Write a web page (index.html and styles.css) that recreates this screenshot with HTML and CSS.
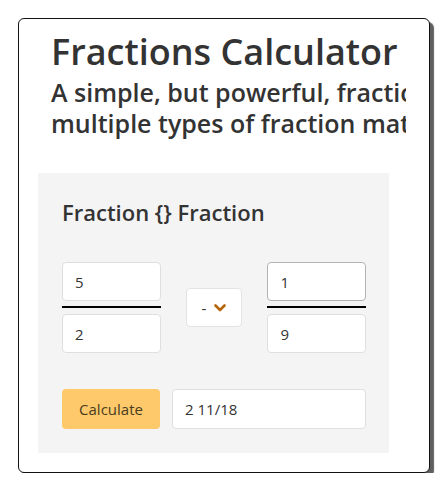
FILE: index.html
```html
<!DOCTYPE html>
<html>
<head>
<meta charset="utf-8">
<link rel="stylesheet" href="styles.css">
</head>
<body>
<div class="card">
  <div class="viewport">
    <header class="intro">
      <h1 class="title">Fractions Calculator</h1>
      <p class="subtitle">A simple, but powerful, fraction calculator for<br>multiple types of fraction math operations.</p>
    </header>
    <section class="panel">
      <h2 class="panel-title">Fraction {} Fraction</h2>
      <div class="equation">
        <div class="fraction">
          <input class="field" type="text" value="5">
          <div class="bar"></div>
          <input class="field" type="text" value="2">
        </div>
        <div class="operator">
          <span class="op-sign">-</span>
          <svg class="chevron" width="12" height="8" viewBox="0 0 12 8"><path d="M1.5 1.5 L6 6 L10.5 1.5" fill="none" stroke="#b7650b" stroke-width="2.6" stroke-linecap="round" stroke-linejoin="round"/></svg>
        </div>
        <div class="fraction">
          <input class="field field-active" type="text" value="1">
          <div class="bar"></div>
          <input class="field" type="text" value="9">
        </div>
      </div>
      <div class="actions">
        <button class="calc-btn">Calculate</button>
        <input class="field result" type="text" value="2 11/18">
      </div>
    </section>
  </div>
</div>
</body>
</html>
```
FILE: styles.css
```css
html, body {
  margin: 0;
  padding: 0;
  background: #ffffff;
}
body {
  padding: 18px 0 0 18px;
  font-family: "Open Sans", "Noto Sans", sans-serif;
  color: #333333;
}
.card {
  box-sizing: border-box;
  width: 412px;
  height: 455px;
  border: 1px solid #111111;
  border-radius: 6px;
  background: #ffffff;
  box-shadow: 4px 4px 1px #5f5f5f;
  padding-left: 19px;
}
.viewport {
  width: 368px;
  overflow: hidden;
}
.intro {
  padding-left: 13px;
  padding-top: 8px;
  height: 154px;
  box-sizing: border-box;
}
.title {
  margin: 0;
  font-size: 36px;
  font-weight: 600;
  line-height: 50px;
  white-space: nowrap;
  color: #333333;
}
.subtitle {
  margin: 0;
  font-size: 25px;
  font-weight: 600;
  line-height: 31px;
  white-space: nowrap;
  color: #333333;
}
.panel {
  width: 351px;
  height: 280px;
  box-sizing: border-box;
  background: #f5f4f5;
  padding: 23px 23px 0 24px;
}
.panel-title {
  margin: 0;
  font-size: 22px;
  font-weight: 600;
  line-height: 32px;
  color: #333333;
}
.equation {
  display: flex;
  align-items: center;
  margin-top: 34px;
}
.fraction {
  display: flex;
  flex-direction: column;
  width: 99px;
}
.field {
  box-sizing: border-box;
  height: 39px;
  border: 1px solid #dfdfdf;
  border-radius: 4px;
  background: #ffffff;
  font-family: "Open Sans", "Noto Sans", sans-serif;
  font-size: 15px;
  color: #333333;
  padding: 0 12px;
  width: 100%;
  outline: none;
}
.field-active {
  border-color: #b3b3b3;
}
.bar {
  height: 2px;
  background: #000000;
  margin: 5px 0 6px;
}
.operator {
  box-sizing: border-box;
  width: 57px;
  height: 39px;
  margin: 0 25px 0 25px;
  border: 1px solid #e3e3e3;
  border-radius: 4px;
  background: #ffffff;
  display: flex;
  align-items: center;
  justify-content: center;
  gap: 8px;
  font-size: 15px;
}
.op-sign {
  color: #333333;
}
.actions {
  display: flex;
  gap: 12px;
  margin-top: 36px;
}
.calc-btn {
  box-sizing: border-box;
  width: 98px;
  height: 40px;
  border: none;
  border-radius: 4px;
  background: #fdc96b;
  font-family: "Open Sans", "Noto Sans", sans-serif;
  font-size: 15px;
  color: #4a3c20;
}
.result {
  width: 194px;
  height: 40px;
}
```
